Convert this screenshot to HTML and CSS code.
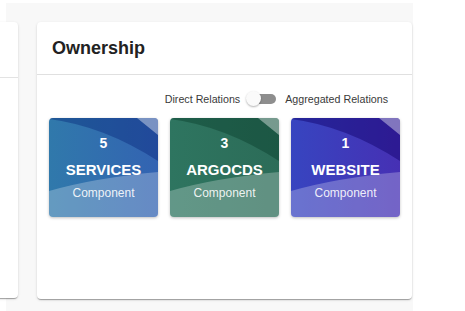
FILE: index.html
```html
<!DOCTYPE html>
<html lang="en">
<head>
    <meta charset="UTF-8">
    <meta name="viewport" content="width=device-width, initial-scale=1.0">
    <title>Ownership</title>
    <link rel="stylesheet" href="styles.css">
</head>
<body>
    <div class="shell">
        <div class="card side-card">
            <div class="side-header"></div>
        </div>

        <div class="card main-card">
            <div class="card-header">
                <h2>Ownership</h2>
            </div>
            <div class="card-content">
                <div class="toggle-row">
                    <span>Direct Relations</span>
                    <span class="switch">
                        <span class="track"></span>
                        <span class="thumb"></span>
                    </span>
                    <span>Aggregated Relations</span>
                </div>

                <div class="tiles">
                    <div class="tile service">
                        <svg class="waves" viewBox="0 0 109 99" preserveAspectRatio="none">
                            <path class="dark" d="M0,0 L0,1 Q55,8 109,43 L109,0 Z"/>
                            <path class="light" d="M0,73 Q45,60 109,54 L109,99 L0,99 Z"/>
                            <path class="corner" d="M88,0 L109,0 L109,17 Z"/>
                        </svg>
                        <div class="count">5</div>
                        <div class="kind">SERVICES</div>
                        <div class="type">Component</div>
                    </div>
                    <div class="tile argocd">
                        <svg class="waves" viewBox="0 0 109 99" preserveAspectRatio="none">
                            <path class="dark" d="M0,0 L0,1 Q55,8 109,43 L109,0 Z"/>
                            <path class="light" d="M0,73 Q45,60 109,54 L109,99 L0,99 Z"/>
                            <path class="corner" d="M88,0 L109,0 L109,17 Z"/>
                        </svg>
                        <div class="count">3</div>
                        <div class="kind">ARGOCDS</div>
                        <div class="type">Component</div>
                    </div>
                    <div class="tile website">
                        <svg class="waves" viewBox="0 0 109 99" preserveAspectRatio="none">
                            <path class="dark" d="M0,0 L0,1 Q55,8 109,43 L109,0 Z"/>
                            <path class="light" d="M0,73 Q45,60 109,54 L109,99 L0,99 Z"/>
                            <path class="corner" d="M88,0 L109,0 L109,17 Z"/>
                        </svg>
                        <div class="count">1</div>
                        <div class="kind">WEBSITE</div>
                        <div class="type">Component</div>
                    </div>
                </div>
            </div>
        </div>
    </div>
</body>
</html>
```

FILE: styles.css
```css
body {
    margin: 0;
    background-color: white;
    font-family: 'Liberation Sans', Arial, Helvetica, sans-serif;
    overflow: hidden;
}
.shell {
    margin: 3px 0 0 6px;
    width: 407px;
    height: 308px;
    box-sizing: border-box;
    padding-top: 19px;
    background-color: #f8f8f8;
    display: flex;
    gap: 19px;
}
.card {
    background-color: white;
    border-radius: 4px;
    box-shadow: 0 2px 1px -1px rgba(0, 0, 0, 0.2), 0 1px 1px rgba(0, 0, 0, 0.14), 0 1px 3px rgba(0, 0, 0, 0.12);
}
.side-card {
    margin-left: -10px;
    width: 22px;
    height: 276px;
    flex-shrink: 0;
}
.side-header {
    height: 55px;
    border-bottom: 1px solid #e3e3e3;
}
.main-card {
    width: 375px;
    height: 277px;
    flex-shrink: 0;
}
.card-header {
    height: 52px;
    display: flex;
    align-items: center;
    padding: 0 15px;
    border-bottom: 1px solid #e0e0e0;
}
.card-header h2 {
    margin: 0;
    font-size: 18px;
    font-weight: 700;
    color: #222;
}
.card-content {
    padding: 12px 12px;
}
.toggle-row {
    height: 24px;
    display: flex;
    align-items: center;
    justify-content: flex-end;
    padding-right: 12px;
    margin-bottom: 7px;
    font-size: 10.7px;
    color: #3a3a3a;
}
.switch {
    position: relative;
    width: 30px;
    height: 16px;
    margin: 0 9px 0 6px;
}
.track {
    position: absolute;
    left: 3px;
    top: 3px;
    width: 27px;
    height: 10px;
    border-radius: 5px;
    background-color: #8e8e8e;
}
.thumb {
    position: absolute;
    left: 0;
    top: 0;
    width: 15px;
    height: 15px;
    border-radius: 50%;
    background-color: #fafafa;
    box-shadow: 0 1px 2px rgba(0, 0, 0, 0.3);
}
.tiles {
    display: grid;
    grid-template-columns: repeat(3, 109px);
    gap: 12px;
}
.tile {
    position: relative;
    height: 99px;
    border-radius: 4px;
    overflow: hidden;
    color: white;
    display: flex;
    flex-direction: column;
    align-items: center;
    justify-content: center;
    box-shadow: 0 1px 3px rgba(0, 0, 0, 0.25);
}
.tile.service {
    background: linear-gradient(90deg, #3079ab, #3363b2);
}
.tile.argocd {
    background: linear-gradient(90deg, #2e7560, #2c6c58);
}
.tile.website {
    background: linear-gradient(90deg, #3745c0, #4630b4);
}
.waves {
    position: absolute;
    left: 0;
    top: 0;
    width: 100%;
    height: 100%;
}
.waves .dark {
    fill: #001a70;
    opacity: 0.35;
}
.argocd .waves .dark {
    fill: #003020;
}
.website .waves .dark {
    fill: #10006a;
    opacity: 0.45;
}
.waves .light {
    fill: white;
    opacity: 0.25;
}
.waves .corner {
    fill: white;
    opacity: 0.4;
}
.count,
.kind,
.type {
    position: relative;
}
.count {
    font-size: 14px;
    font-weight: 700;
    line-height: 16px;
}
.kind {
    margin-top: 10px;
    font-size: 15px;
    font-weight: 700;
    line-height: 18px;
}
.type {
    margin-top: 7px;
    font-size: 12px;
    line-height: 14px;
    color: rgba(255, 255, 255, 0.9);
}
```
